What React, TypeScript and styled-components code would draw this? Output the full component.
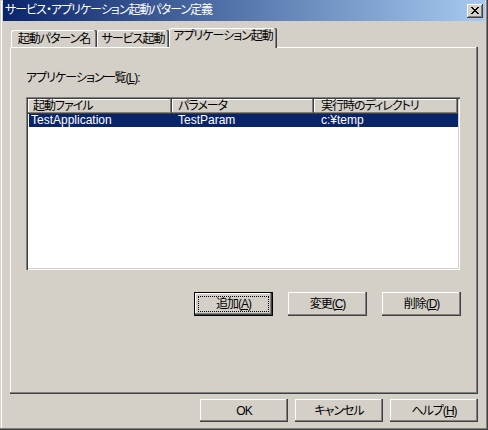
import React from "react";
import styled, { createGlobalStyle } from "styled-components";

const GlobalStyle = createGlobalStyle`
  html, body {
    margin: 0;
    padding: 0;
    background: #d4d0c8;
  }
  body {
    font-family: "Liberation Sans", "Noto Sans CJK JP", sans-serif;
    font-size: 12px;
    color: #000;
    font-feature-settings: "palt";
    letter-spacing: -1px;
  }
`;

const Window = styled.div`
  width: 488px;
  height: 430px;
  box-sizing: border-box;
  padding: 0 3px 3px 3px;
  background: #d4d0c8;
  display: flex;
  flex-direction: column;
  box-shadow: inset -1px -1px #404040, inset -2px -2px #808080,
    inset 1px 1px #d4d0c8, inset 2px 2px #ffffff;
`;

const TitleBar = styled.div`
  height: 21px;
  flex: none;
  display: flex;
  align-items: center;
  justify-content: space-between;
  padding: 0 2px;
  background: linear-gradient(to right, #0a246a, #a6caf0);
  color: #fff;
`;

const TitleText = styled.span`
  font-size: 12px;
  line-height: 21px;
  white-space: nowrap;
`;

const CloseButton = styled.div`
  width: 16px;
  height: 14px;
  box-sizing: border-box;
  background: #d4d0c8;
  display: flex;
  align-items: center;
  justify-content: center;
  padding: 0 1px 1px 0;
  box-shadow: inset -1px -1px #404040, inset 1px 1px #ffffff,
    inset -2px -2px #808080, inset 2px 2px #d4d0c8;
`;

const Body = styled.div`
  flex: 1;
  display: flex;
  flex-direction: column;
  padding: 7px 7px 0 7px;
`;

const TabRow = styled.div`
  height: 20px;
  display: flex;
  align-items: flex-end;
  padding-left: 1px;
  position: relative;
  z-index: 1;
`;

const Tab = styled.div<{ $active?: boolean; $w: number }>`
  width: ${(p) => p.$w}px;
  height: ${(p) => (p.$active ? 20 : 17)}px;
  margin-bottom: ${(p) => (p.$active ? 0 : 1)}px;
  box-sizing: border-box;
  background: #d4d0c8;
  border-radius: 2px 2px 0 0;
  box-shadow: inset -1px 0 #404040, inset -2px 0 #808080, inset 1px 1px #ffffff;
  display: flex;
  justify-content: center;
  padding-top: ${(p) => (p.$active ? 1 : 2)}px;
  line-height: 14px;
  white-space: nowrap;
`;

const Panel = styled.div`
  height: 347px;
  margin-top: -1px;
  box-sizing: border-box;
  display: flex;
  flex-direction: column;
  padding: 0 17px 0 16px;
  box-shadow: inset -1px -1px #404040, inset -2px -2px #808080,
    inset 1px 1px #ffffff;
`;

const Label = styled.div`
  margin-top: 23px;
  line-height: 16px;
  height: 16px;
`;

const ListBox = styled.div`
  margin-top: 11px;
  width: 434px;
  height: 173px;
  box-sizing: border-box;
  padding: 2px;
  background: #ffffff;
  box-shadow: inset 1px 1px #808080, inset 2px 2px #404040,
    inset -1px -1px #ffffff, inset -2px -2px #d4d0c8;
`;

const HeaderRow = styled.div`
  display: grid;
  grid-template-columns: 144px 142px 144px;
  height: 15px;
`;

const HeaderCell = styled.div<{ $pad: number }>`
  background: #d4d0c8;
  box-shadow: inset -1px -1px #404040, inset -2px -2px #808080,
    inset 1px 1px #ffffff;
  padding-left: ${(p) => p.$pad}px;
  line-height: 15px;
  white-space: nowrap;
  overflow: hidden;
`;

const DataRow = styled.div<{ $selected?: boolean }>`
  display: grid;
  grid-template-columns: 143px 142px 144px;
  margin-left: 1px;
  height: 13px;
  background: ${(p) => (p.$selected ? "#0a246a" : "transparent")};
  color: ${(p) => (p.$selected ? "#ffffff" : "#000000")};
`;

const DataCell = styled.div<{ $pad: number }>`
  padding-left: ${(p) => p.$pad}px;
  line-height: 13px;
  letter-spacing: 0;
  white-space: nowrap;
  overflow: hidden;
`;

const ButtonRow = styled.div<{ $gap: number; $top: number }>`
  display: flex;
  justify-content: flex-end;
  gap: ${(p) => p.$gap}px;
  margin-top: ${(p) => p.$top}px;
`;

const PushButton = styled.button<{ $default?: boolean; $w: number; $h: number }>`
  position: relative;
  width: ${(p) => p.$w}px;
  height: ${(p) => p.$h}px;
  border: none;
  padding: 0;
  margin: 0;
  background: #d4d0c8;
  font: inherit;
  letter-spacing: inherit;
  color: #000;
  line-height: 14px;
  white-space: nowrap;
  box-shadow: ${(p) =>
    p.$default
      ? "inset 0 0 0 1px #000000, inset -2px -2px #404040, inset -3px -3px #808080, inset 2px 2px #ffffff"
      : "inset -1px -1px #404040, inset -2px -2px #808080, inset 1px 1px #ffffff"};
  ${(p) =>
    p.$default
      ? `&::after {
    content: "";
    position: absolute;
    left: 4px;
    right: 4px;
    top: 4px;
    bottom: 4px;
    border: 1px dotted #000;
  }`
      : ""}
`;

const CloseGlyph = () => (
  <svg width="8" height="7" viewBox="0 0 8 7" shapeRendering="crispEdges">
    <path
      d="M0 0h2v1H0zM6 0h2v1H6zM1 1h2v1H1zM5 1h2v1H5zM2 2h4v1H2zM3 3h2v1H3zM2 4h4v1H2zM1 5h2v1H1zM5 5h2v1H5zM0 6h2v1H0zM6 6h2v1H6z"
      fill="#000"
    />
  </svg>
);

export default function App() {
  return (
    <>
      <GlobalStyle />
      <Window>
        <TitleBar>
          <TitleText>サービス・アプリケーション起動パターン定義</TitleText>
          <CloseButton>
            <CloseGlyph />
          </CloseButton>
        </TitleBar>
        <Body>
          <TabRow>
            <Tab $w={86}>起動パターン名</Tab>
            <Tab $w={72}>サービス起動</Tab>
            <Tab $w={108} $active>
              アプリケーション起動
            </Tab>
          </TabRow>
          <Panel>
            <Label>
              アプリケーション一覧(<u>L</u>):
            </Label>
            <ListBox>
              <HeaderRow>
                <HeaderCell $pad={5}>起動ファイル</HeaderCell>
                <HeaderCell $pad={6}>パラメータ</HeaderCell>
                <HeaderCell $pad={7}>実行時のディレクトリ</HeaderCell>
              </HeaderRow>
              <DataRow $selected>
                <DataCell $pad={2}>TestApplication</DataCell>
                <DataCell $pad={6}>TestParam</DataCell>
                <DataCell $pad={7}>c:¥temp</DataCell>
              </DataRow>
            </ListBox>
            <ButtonRow $gap={15} $top={22}>
              <PushButton $default $w={79} $h={24}>
                追加(<u>A</u>)
              </PushButton>
              <PushButton $w={79} $h={24}>
                変更(<u>C</u>)
              </PushButton>
              <PushButton $w={79} $h={24}>
                削除(<u>D</u>)
              </PushButton>
            </ButtonRow>
          </Panel>
          <ButtonRow $gap={7} $top={5}>
            <PushButton $w={88} $h={23}>OK</PushButton>
            <PushButton $w={88} $h={23}>キャンセル</PushButton>
            <PushButton $w={88} $h={23}>
              ヘルプ(<u>H</u>)
            </PushButton>
          </ButtonRow>
        </Body>
      </Window>
    </>
  );
}
